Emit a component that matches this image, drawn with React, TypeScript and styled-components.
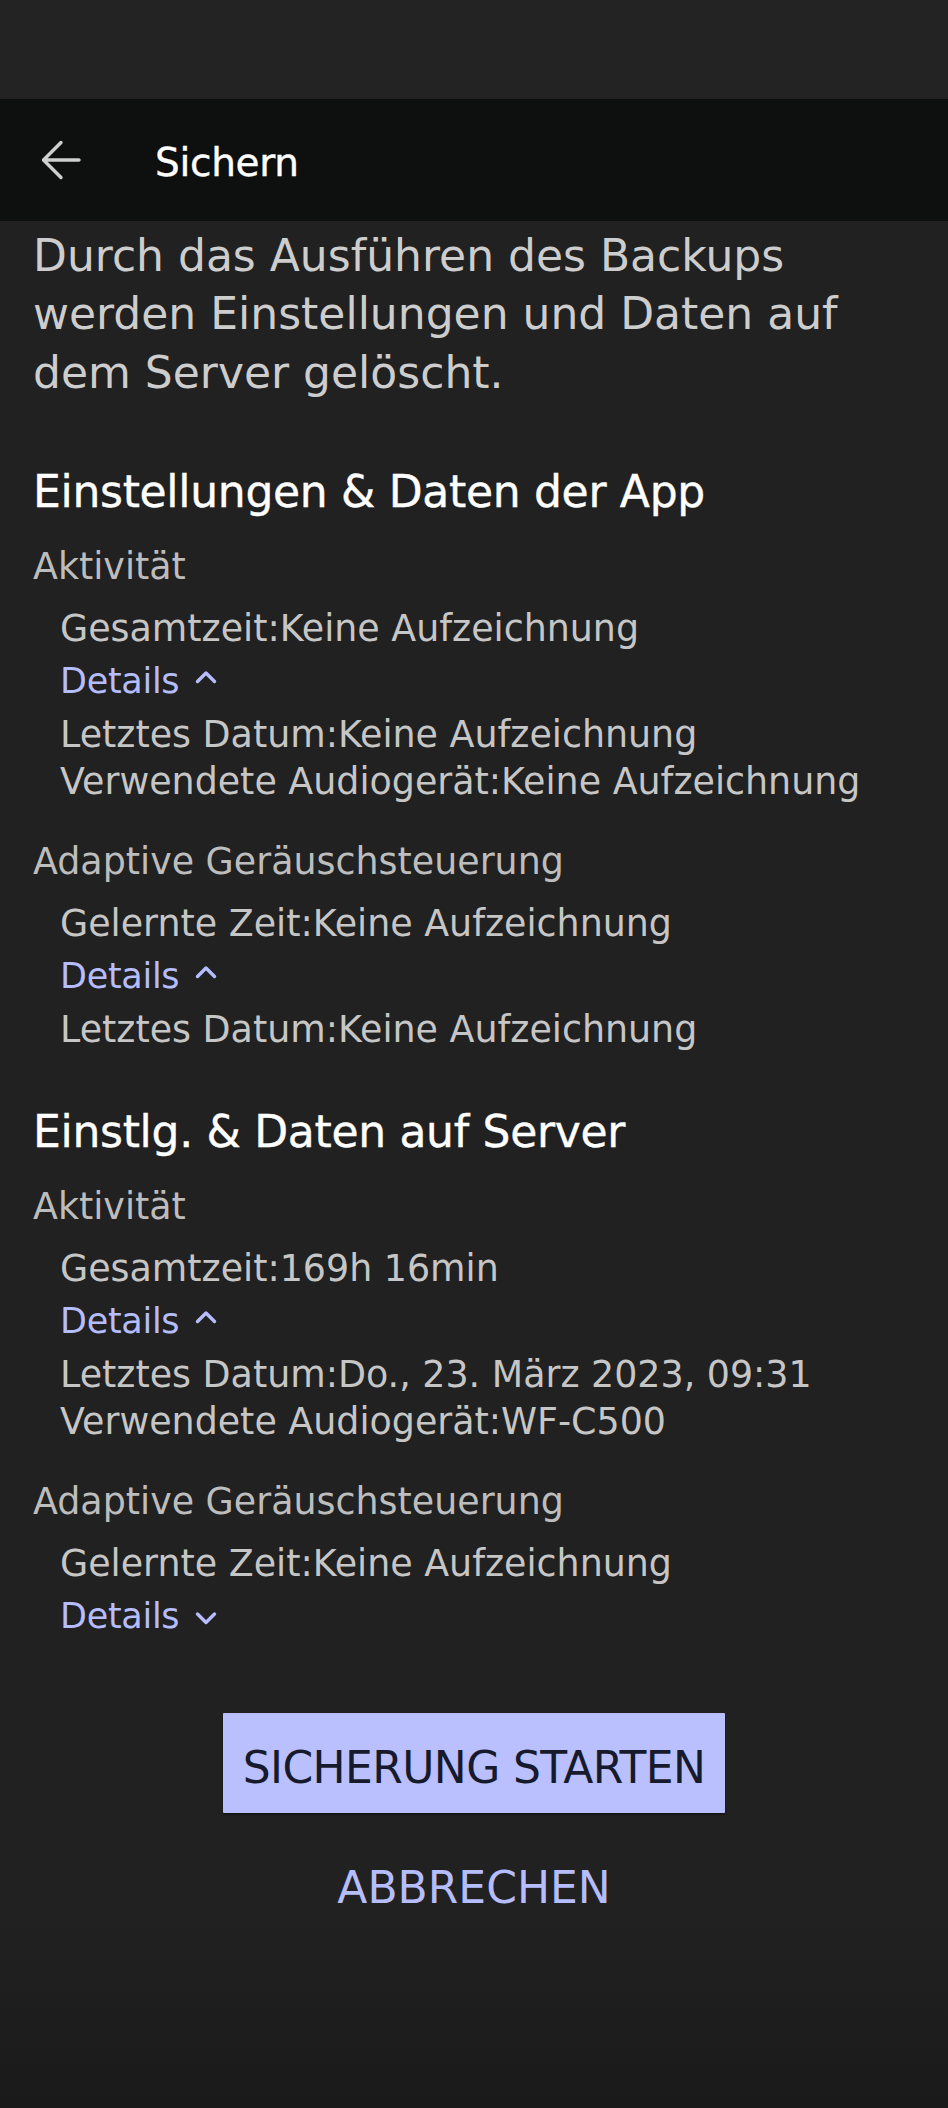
import React from "react";
import styled, { createGlobalStyle } from "styled-components";

const GlobalStyle = createGlobalStyle`
  html, body {
    margin: 0;
    padding: 0;
    background: #212121;
  }
  * {
    box-sizing: border-box;
  }
`;

const FONT = `"DejaVu Sans", "Noto Sans", sans-serif`;

const Page = styled.div`
  min-height: 100vh;
  display: flex;
  flex-direction: column;
  font-family: ${FONT};
  background: linear-gradient(180deg, #212121 0%, #212121 91%, #1a1a1a 100%);
`;

const StatusBar = styled.div`
  height: 99px;
  background: #232323;
`;

const TopBar = styled.header`
  height: 122px;
  display: flex;
  align-items: center;
  padding-left: 41px;
  background: #0e0f0f;
`;

const BackButton = styled.button`
  width: 40px;
  height: 40px;
  padding: 0;
  border: 0;
  background: transparent;
  display: flex;
  align-items: center;
  justify-content: center;
  color: #cfcfcf;
  cursor: pointer;
`;

const Title = styled.h1`
  margin: 0 0 0 74px;
  padding-top: 6px;
  font-size: 39px;
  line-height: 46px;
  font-weight: 400;
  letter-spacing: -0.3px;
  color: #ffffff;
  -webkit-text-stroke: 0.4px #ffffff;
`;

const Content = styled.main`
  display: flex;
  flex-direction: column;
  padding: 5.5px 33px 0 33px;
`;

const Notice = styled.p`
  margin: 0;
  font-size: 44px;
  line-height: 58.5px;
  color: #cdcdcd;
`;

const Section = styled.section<{ $first?: boolean }>`
  display: flex;
  flex-direction: column;
  margin-top: ${(p) => (p.$first ? "61.5px" : "50.5px")};
`;

const SectionTitle = styled.h2`
  margin: 0;
  font-size: 44px;
  line-height: 56px;
  font-weight: 400;
  letter-spacing: -0.3px;
  color: #ffffff;
  -webkit-text-stroke: 0.4px #ffffff;
`;

const Group = styled.div`
  display: flex;
  flex-direction: column;
  margin-top: 33.5px;

  &:first-of-type {
    margin-top: 23px;
  }
`;

const GroupLabel = styled.div`
  font-size: 36.4px;
  line-height: 48px;
  color: #bdbdbd;
`;

const Items = styled.div`
  display: flex;
  flex-direction: column;
  margin-top: 12px;
  padding-left: 27px;
`;

const ItemLine = styled.div<{ $dense?: boolean }>`
  font-size: 36.4px;
  line-height: ${(p) => (p.$dense ? "47px" : "52px")};
  color: #c6c6c6;
  white-space: nowrap;
`;

const DetailsToggle = styled.button`
  align-self: flex-start;
  display: flex;
  align-items: center;
  gap: 16px;
  height: 52px;
  padding: 0;
  border: 0;
  background: transparent;
  font-family: ${FONT};
  font-size: 35px;
  line-height: 52px;
  letter-spacing: -0.3px;
  color: #b5bdfc;
  cursor: pointer;
`;

const Chevron = styled.svg<{ $open: boolean }>`
  width: 22px;
  height: 16px;
  margin-top: ${(p) => (p.$open ? "-8px" : "4px")};
`;

const DetailLines = styled.div`
  display: flex;
  flex-direction: column;
  margin-top: 4px;
`;

const Actions = styled.div`
  display: flex;
  flex-direction: column;
  align-items: center;
  margin-top: 70.5px;
`;

const PrimaryButton = styled.button`
  height: 100px;
  padding: 10px 20px 0;
  border: 0;
  border-radius: 1px;
  background: #b9c0fd;
  box-shadow: 0 2px 2px rgba(0, 0, 0, 0.35);
  font-family: ${FONT};
  font-size: 44px;
  letter-spacing: -0.6px;
  color: #161a2c;
  cursor: pointer;
`;

const TextButton = styled.button`
  margin-top: 45px;
  padding: 0 10px;
  border: 0;
  background: transparent;
  font-family: ${FONT};
  font-size: 44px;
  line-height: 60px;
  color: #b5bdfc;
  cursor: pointer;
`;

type Entry = {
  label: string;
  lead: string;
  open: boolean;
  details: string[];
};

type Block = {
  title: string;
  entries: Entry[];
};

const blocks: Block[] = [
  {
    title: "Einstellungen & Daten der App",
    entries: [
      {
        label: "Aktivität",
        lead: "Gesamtzeit:Keine Aufzeichnung",
        open: true,
        details: [
          "Letztes Datum:Keine Aufzeichnung",
          "Verwendete Audiogerät:Keine Aufzeichnung",
        ],
      },
      {
        label: "Adaptive Geräuschsteuerung",
        lead: "Gelernte Zeit:Keine Aufzeichnung",
        open: true,
        details: ["Letztes Datum:Keine Aufzeichnung"],
      },
    ],
  },
  {
    title: "Einstlg. & Daten auf Server",
    entries: [
      {
        label: "Aktivität",
        lead: "Gesamtzeit:169h 16min",
        open: true,
        details: [
          "Letztes Datum:Do., 23. März 2023, 09:31",
          "Verwendete Audiogerät:WF-C500",
        ],
      },
      {
        label: "Adaptive Geräuschsteuerung",
        lead: "Gelernte Zeit:Keine Aufzeichnung",
        open: false,
        details: [],
      },
    ],
  },
];

function BackArrow() {
  return (
    <svg width="40" height="40" viewBox="0 0 40 40" fill="none">
      <path
        d="M38 20H3M20 2.5L2.5 20L20 37.5"
        stroke="currentColor"
        strokeWidth="3.4"
        strokeLinecap="round"
        strokeLinejoin="round"
      />
    </svg>
  );
}

function ToggleChevron({ open }: { open: boolean }) {
  return (
    <Chevron $open={open} viewBox="0 0 22 16" fill="none">
      <path
        d={open ? "M2.5 12.5L11 4L19.5 12.5" : "M2.5 4L11 12.5L19.5 4"}
        stroke="currentColor"
        strokeWidth="3.4"
        strokeLinecap="round"
        strokeLinejoin="round"
      />
    </Chevron>
  );
}

export default function App() {
  return (
    <>
      <GlobalStyle />
      <Page>
        <StatusBar />
        <TopBar>
          <BackButton aria-label="Zurück">
            <BackArrow />
          </BackButton>
          <Title>Sichern</Title>
        </TopBar>
        <Content>
          <Notice>
            Durch das Ausführen des Backups werden Einstellungen und Daten auf
            dem Server gelöscht.
          </Notice>
          {blocks.map((block, bi) => (
            <Section key={block.title} $first={bi === 0}>
              <SectionTitle>{block.title}</SectionTitle>
              {block.entries.map((entry) => (
                <Group key={entry.label}>
                  <GroupLabel>{entry.label}</GroupLabel>
                  <Items>
                    <ItemLine>{entry.lead}</ItemLine>
                    <DetailsToggle>
                      Details
                      <ToggleChevron open={entry.open} />
                    </DetailsToggle>
                    {entry.open && entry.details.length > 0 && (
                      <DetailLines>
                        {entry.details.map((d) => (
                          <ItemLine key={d} $dense>
                            {d}
                          </ItemLine>
                        ))}
                      </DetailLines>
                    )}
                  </Items>
                </Group>
              ))}
            </Section>
          ))}
          <Actions>
            <PrimaryButton>SICHERUNG STARTEN</PrimaryButton>
            <TextButton>ABBRECHEN</TextButton>
          </Actions>
        </Content>
      </Page>
    </>
  );
}
